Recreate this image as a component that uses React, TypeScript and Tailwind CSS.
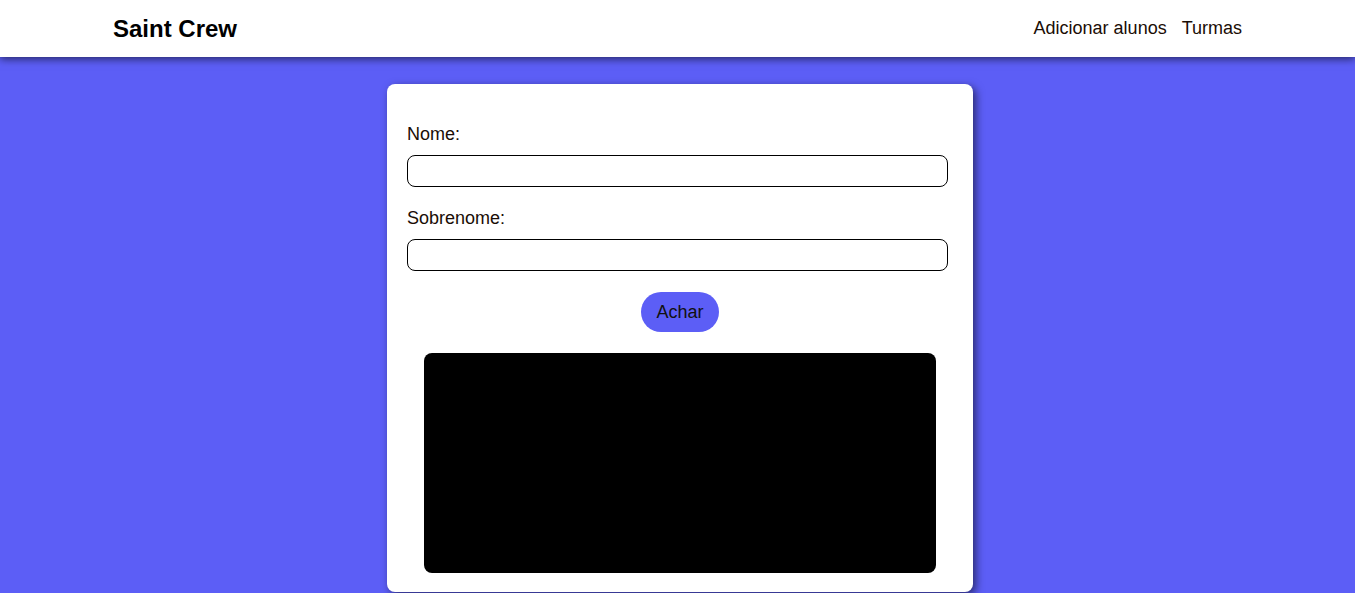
import React from "react";

export default function App() {
  return (
    <div
      className="min-h-[593px] bg-[#5c5ef6] text-black"
      style={{ fontFamily: '"Liberation Sans", Arial, sans-serif' }}
    >
      <header className="relative z-10 h-[57px] bg-white shadow-[0_2px_8px_rgba(0,0,0,0.6)]">
        <div className="mx-auto flex h-full w-[1129px] items-center justify-between">
          <span className="text-[24px] font-bold leading-none">Saint Crew</span>
          <nav className="flex gap-[15px] text-[18px] text-[#1a0d05]">
            <a>Adicionar alunos</a>
            <a>Turmas</a>
          </nav>
        </div>
      </header>
      <main className="flex justify-center pl-[5px] pt-[27px]">
        <div className="flex w-[586px] flex-col rounded-[8px] bg-white pl-[20px] pr-[25px] pt-[40px] pb-[19px] shadow-[3px_3px_8px_rgba(0,0,0,0.55)]">
          <label className="text-[18px] leading-[20px] text-[#1a0d05]">Nome:</label>
          <input className="mt-[11px] h-[32px] w-[541px] rounded-[8px] border border-black px-2" />
          <label className="mt-[21px] text-[18px] leading-[20px] text-[#1a0d05]">Sobrenome:</label>
          <input className="mt-[11px] h-[32px] w-[541px] rounded-[8px] border border-black px-2" />
          <div className="ml-[-20px] mr-[-25px] mt-[21px] flex justify-center">
            <button className="h-[40px] w-[78px] rounded-full bg-[#5c5ef6] text-[18px] text-[#111]">
              Achar
            </button>
          </div>
          <div className="ml-[-20px] mr-[-25px] mt-[21px] flex justify-center">
            <div className="h-[220px] w-[512px] rounded-[8px] bg-black" />
          </div>
        </div>
      </main>
    </div>
  );
}
